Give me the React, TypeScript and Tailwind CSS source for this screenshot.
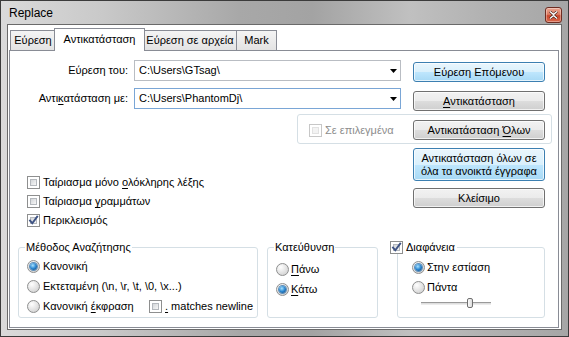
import React from "react";

const U = ({ children }: { children: React.ReactNode }) => (
  <span className="underline underline-offset-[2px] decoration-[1px]">{children}</span>
);

function CheckBox({ checked = false, disabled = false }: { checked?: boolean; disabled?: boolean }) {
  return (
    <span
      className={
        disabled
          ? "relative w-[13px] h-[13px] shrink-0 border border-[#c7c7c7] bg-white p-[2px] flex"
          : "relative w-[13px] h-[13px] shrink-0 border border-[#8e8f8f] bg-white p-[2px] flex"
      }
    >
      <span
        className={
          disabled
            ? "flex-1 border border-[#e2e2e2] bg-[#f3f3f3]"
            : "flex-1 border border-[#b4b8bd] bg-[linear-gradient(135deg,#d3d6d9,#f7f7f7)]"
        }
      />
      {checked && (
        <svg className="absolute left-[-1px] top-[-1px]" width="13" height="13" viewBox="0 0 13 13">
          <path d="M3 6.5 L5.3 9.2 L10.2 2.6" fill="none" stroke="#3e5384" strokeWidth="1.9" strokeLinecap="square" />
        </svg>
      )}
    </span>
  );
}

function Radio({ checked = false }: { checked?: boolean }) {
  return (
    <span className="w-[13px] h-[13px] shrink-0 rounded-full border border-[#8e8f8f] bg-[radial-gradient(circle_at_35%_30%,#ffffff,#e4e4e4_50%,#c8c8c8)] flex items-center justify-center">
      {checked && (
        <span className="w-[7px] h-[7px] rounded-full bg-[radial-gradient(circle_at_40%_35%,#a8e2ff,#2a86d0_50%,#0c3b70)] shadow-[0_0_0_1px_#5f8fb9]" />
      )}
    </span>
  );
}

function Btn({ children, blue = false, h = "h-[20px]" }: { children: React.ReactNode; blue?: boolean; h?: string }) {
  return (
    <div
      className={
        (blue
          ? "border-[#3c7fb1] bg-[linear-gradient(#eaf6fd_0%,#d9f0fc_50%,#bee6fd_51%,#a7d9f5_100%)] "
          : "border-[#707070] bg-[linear-gradient(#f2f2f2_0%,#ebebeb_50%,#dddddd_51%,#cfcfcf_100%)] ") +
        "w-[132px] rounded-[3px] border shadow-[inset_0_0_0_1px_rgba(255,255,255,0.7)] flex items-center justify-center text-center leading-[13px] " +
        h
      }
    >
      {children}
    </div>
  );
}

function Arrow() {
  return (
    <svg width="7" height="4" viewBox="0 0 7 4" className="shrink-0">
      <path d="M0 0 H7 L3.5 4 Z" fill="#000" />
    </svg>
  );
}

export default function App() {
  return (
    <div className="w-[569px] h-[337px] flex flex-col border border-[#3b3b3b] bg-[linear-gradient(to_right,#dadada_0%,#c9c9c9_18%,#a8a8a8_42%,#a3a3a3_55%,#c0c0c0_72%,#b2b2b2_85%,#a6a6a6_100%)] font-['Liberation_Sans',Arial,sans-serif] text-[11px] text-black overflow-hidden">
      {/* Title bar */}
      <div className="h-[23px] shrink-0 flex items-start pl-[8px] pr-[6px]">
        <span className="text-[12px] leading-[14px] mt-[5px]">Replace</span>
        <div className="ml-auto mt-[6px] w-[17px] h-[16px] rounded-[3px] border border-[#6e2d22] bg-[linear-gradient(#eba792_0%,#dc7b62_45%,#c9452a_55%,#d8694d_100%)] shadow-[inset_0_0_0_1px_rgba(255,255,255,0.35)] flex items-center justify-center">
          <svg width="9" height="8" viewBox="0 0 9 8">
            <path d="M1 0.5 L4.5 3.6 L8 0.5 M1 7.5 L4.5 4.4 L8 7.5" fill="none" stroke="#3a1a14" strokeWidth="2.6" />
            <path d="M1 0.5 L4.5 3.6 L8 0.5 M1 7.5 L4.5 4.4 L8 7.5" fill="none" stroke="#ffffff" strokeWidth="1.4" />
          </svg>
        </div>
      </div>

      {/* Client area */}
      <div className="flex-1 mx-[6px] mb-[6px] border border-[#6a6a6a] bg-white flex flex-col">
        {/* Tabs */}
        <div className="mt-[3px] h-[22px] pl-[2px] flex items-end shrink-0">
          <div className="w-[46px] h-[20px] border border-b-0 border-[#898c95] bg-[linear-gradient(#f4f4f4,#e3e3e3)] flex items-center justify-center">
            Εύρεση
          </div>
          <div className="relative z-10 w-[91px] h-[23px] -mb-[1px] -mx-[2px] border border-b-0 border-[#898c95] bg-white flex items-center justify-center pb-[2px]">
            Αντικατάσταση
          </div>
          <div className="w-[94px] h-[20px] border border-b-0 border-[#898c95] bg-[linear-gradient(#f4f4f4,#e3e3e3)] flex items-center justify-center">
            Εύρεση σε αρχεία
          </div>
          <div className="w-[40px] h-[20px] border border-b-0 border-l-0 border-[#898c95] bg-[linear-gradient(#f4f4f4,#e3e3e3)] flex items-center justify-center">
            Mark
          </div>
        </div>

        {/* Panel */}
        <div className="flex-1 ml-[1px] mr-[2px] mb-[1px] border border-[#898c95] bg-white pt-[9px] pr-[13px] flex flex-col">
          {/* Row 1 */}
          <div className="flex items-start">
            <div className="w-[118px] h-[21px] flex items-center justify-end">Εύρεση του:</div>
            <div className="ml-[6px] w-[267px] h-[21px] border border-[#b9bdc3] flex items-center pl-[4px] pr-[3px]">
              <span className="flex-1">{"C:\\Users\\GTsag\\"}</span>
              <Arrow />
            </div>
            <div className="ml-[12px] mt-[2px]">
              <Btn blue>Εύρεση Επόμενου</Btn>
            </div>
          </div>

          {/* Row 2 */}
          <div className="flex items-start mt-[6px]">
            <div className="w-[118px] h-[21px] flex items-center justify-end">
              <span>
                Αντι<U>κ</U>ατάσταση με:
              </span>
            </div>
            <div className="ml-[6px] w-[267px] h-[21px] border border-[#7aa6d6] flex items-center pl-[4px] pr-[3px]">
              <span className="flex-1">{"C:\\Users\\PhantomDj\\"}</span>
              <Arrow />
            </div>
            <div className="ml-[12px] mt-[3px]">
              <Btn>
                <span>
                  <U>Α</U>ντικατάσταση
                </span>
              </Btn>
            </div>
          </div>

          {/* Row 3: in selection box */}
          <div className="mt-[3px] ml-[287px] w-[255px] h-[30px] border border-[#d5dfe5] rounded-[3px] flex items-start pt-[5px] pl-[11px] pr-[6px]">
            <div className="h-[20px] flex items-center gap-[3px] text-[#8d8d8d]">
              <CheckBox disabled />
              <span>Σε επιλεγμένα</span>
            </div>
            <div className="ml-auto">
              <Btn>
                <span>
                  Αντικατάσταση <U>Ό</U>λων
                </span>
              </Btn>
            </div>
          </div>

          {/* Row 4 */}
          <div className="mt-[4px] flex items-start">
            <div className="pl-[17px] pt-[25px] flex flex-col">
              <div className="h-[19px] flex items-center gap-[3px]">
                <CheckBox />
                <span>
                  Ταίριασμα μόνο <U>ο</U>λόκληρης λέξης
                </span>
              </div>
              <div className="h-[19px] flex items-center gap-[3px]">
                <CheckBox />
                <span>
                  Ταίριασμα <U>γ</U>ραμμάτων
                </span>
              </div>
              <div className="h-[19px] flex items-center gap-[3px]">
                <CheckBox checked />
                <span>Περικλεισμός</span>
              </div>
            </div>
            <div className="ml-auto flex flex-col gap-[7px]">
              <Btn blue h="h-[33px]">
                <span>
                  Αντικατάσταση όλων σε
                  <br />
                  όλα τα ανοικτά έγγραφα
                </span>
              </Btn>
              <Btn>Κλείσιμο</Btn>
            </div>
          </div>

          {/* Group boxes */}
          <div className="mt-[10px] flex items-start">
            <fieldset className="ml-[8px] w-[240px] h-[78px] border border-[#d5dfe5] rounded-[3px] p-0">
              <legend className="ml-[6px] px-[1px] leading-[14px]">Μέθοδος Αναζήτησης</legend>
              <div className="pl-[8px]">
                <div className="mt-[2px] h-[20px] flex items-center gap-[3px]">
                  <Radio checked />
                  <span>Κανονική</span>
                </div>
                <div className="h-[20px] flex items-center gap-[3px]">
                  <Radio />
                  <span>{"Εκτεταμένη (\\n, \\r, \\t, \\0, \\x...)"}</span>
                </div>
                <div className="h-[20px] flex items-center">
                  <div className="w-[122px] flex items-center gap-[3px]">
                    <Radio />
                    <span>
                      Κανονική <U>έ</U>κφραση
                    </span>
                  </div>
                  <div className="flex items-center gap-[3px]">
                    <CheckBox />
                    <span>
                      <U>.</U> matches newline
                    </span>
                  </div>
                </div>
              </div>
            </fieldset>

            <fieldset className="ml-[9px] w-[111px] h-[78px] border border-[#d5dfe5] rounded-[3px] p-0">
              <legend className="ml-[6px] px-[1px] leading-[14px]">Κατεύθυνση</legend>
              <div className="pl-[8px]">
                <div className="mt-[5px] h-[20px] flex items-center gap-[2px]">
                  <Radio />
                  <span>
                    <U>Π</U>άνω
                  </span>
                </div>
                <div className="h-[20px] flex items-center gap-[2px]">
                  <Radio checked />
                  <span>
                    <U>Κ</U>άτω
                  </span>
                </div>
              </div>
            </fieldset>

            <fieldset className="ml-[19px] w-[148px] h-[78px] border border-[#d5dfe5] rounded-[3px] p-0">
              <legend className="ml-[-8px] pr-[2px] leading-[14px] bg-white">
                <span className="flex items-center gap-[3px]">
                  <CheckBox checked />
                  <span>Διαφάνεια</span>
                </span>
              </legend>
              <div className="pl-[14px]">
                <div className="mt-[3px] h-[20px] flex items-center gap-[2px]">
                  <Radio checked />
                  <span>Στην εστίαση</span>
                </div>
                <div className="h-[20px] flex items-center gap-[2px]">
                  <Radio />
                  <span>Πάντα</span>
                </div>
                <div className="ml-[9px] w-[70px] h-[12px] flex items-center relative">
                  <div className="w-full h-[3px] border-t border-[#9a9a9a] border-b border-b-[#ececec] bg-[#dedede]" />
                  <div className="absolute left-[46px] top-[1px] w-[6px] h-[10px] rounded-[2px] border border-[#6f6f6f] bg-[linear-gradient(to_right,#fafafa,#dcdcdc)]" />
                </div>
              </div>
            </fieldset>
          </div>
        </div>
      </div>
    </div>
  );
}
